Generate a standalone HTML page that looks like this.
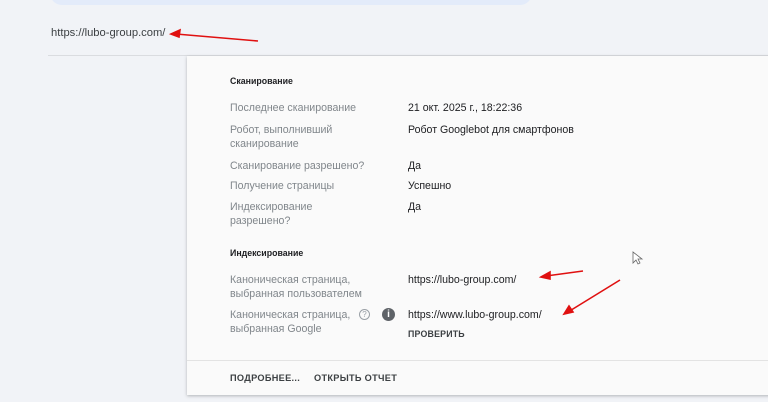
<!DOCTYPE html>
<html><head><meta charset="utf-8"><style>
body{margin:0;width:768px;height:402px;background:#f1f3f7;position:relative;overflow:hidden;font-family:"Liberation Sans",Arial,sans-serif;}
.a{position:absolute;line-height:14px;white-space:nowrap;}
.l{color:#80868b;font-size:10.6px;left:230px;}
.v{color:#202124;font-size:10.6px;left:408px;}
.h{color:#202124;font-size:8.8px;font-weight:bold;left:230px;}
.b{color:#3c4043;font-size:9.2px;font-weight:bold;letter-spacing:.3px;}
</style></head><body>
<div style="position:absolute;left:50px;top:-20px;width:482px;height:25px;background:#e3ebfa;border-radius:12px"></div>
<div class="a" style="left:51px;top:26px;font-size:11.2px;color:#3c4043">https://lubo-group.com/</div>
<div style="position:absolute;left:48px;top:55px;width:720px;height:1px;background:#dadce0"></div>
<div style="position:absolute;left:187px;top:56px;width:600px;height:339px;background:#fafafa;box-shadow:0 1px 3px rgba(60,64,67,.35)"></div>
<div style="position:absolute;left:187px;top:360px;width:600px;height:1px;background:#e3e3e3"></div>
<div class="a h" style="top:74px">Сканирование</div>
<div class="a l" style="top:101px">Последнее сканирование</div>
<div class="a v" style="top:101px">21 окт. 2025 г., 18:22:36</div>
<div class="a l" style="top:123px">Робот, выполнивший<br>сканирование</div>
<div class="a v" style="top:123px">Робот Googlebot для смартфонов</div>
<div class="a l" style="top:159px">Сканирование разрешено?</div>
<div class="a v" style="top:159px">Да</div>
<div class="a l" style="top:179px">Получение страницы</div>
<div class="a v" style="top:179px">Успешно</div>
<div class="a l" style="top:200px">Индексирование<br>разрешено?</div>
<div class="a v" style="top:200px">Да</div>
<div class="a h" style="top:246px">Индексирование</div>
<div class="a l" style="top:273px">Каноническая страница,<br>выбранная пользователем</div>
<div class="a v" style="top:273px">https://lubo-group.com/</div>
<div class="a l" style="top:308px">Каноническая страница,<br>выбранная Google</div>
<div style="position:absolute;left:359px;top:309px;width:9px;height:9px;border:1px solid #9aa0a6;border-radius:50%;font-size:8px;line-height:9px;text-align:center;color:#9aa0a6;font-family:'Liberation Sans'">?</div>
<div style="position:absolute;left:382px;top:308px;width:13px;height:13px;background:#5f6368;border-radius:50%;color:#fff;font-size:10px;font-weight:bold;line-height:13px;text-align:center">i</div>
<div class="a v" style="top:308px">https://www.lubo-group.com/</div>
<div class="a b" style="left:408px;top:327px;font-size:8.8px;letter-spacing:.2px">ПРОВЕРИТЬ</div>
<div class="a b" style="left:230px;top:371px">ПОДРОБНЕЕ...</div>
<div class="a b" style="left:314px;top:371px">ОТКРЫТЬ ОТЧЕТ</div>
<svg style="position:absolute;left:0;top:0" width="768" height="402">
<g stroke="#e01010" stroke-width="1.6" fill="#e01010">
<line x1="258" y1="41" x2="176" y2="34"/><polygon points="171,34 180,30 179,37"/>
<line x1="583" y1="271" x2="546" y2="276"/><polygon points="541,277 550,272 550,279"/>
<line x1="620" y1="280" x2="568" y2="312"/><polygon points="564,314 569,306 573,312"/>
</g>
<path d="M633 252 L633 263 L636 260 L638 264 L640 263 L638 259 L642 259 Z" fill="#fff" stroke="#666" stroke-width=".8"/>
</svg>
</body></html>
